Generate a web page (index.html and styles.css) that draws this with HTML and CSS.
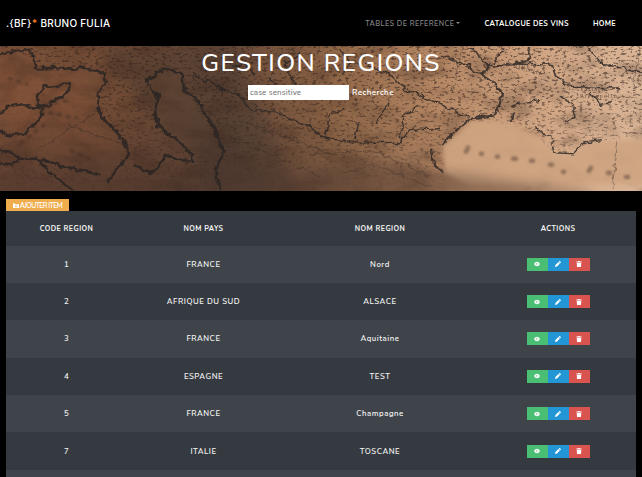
FILE: index.html
```html
<!DOCTYPE html>
<html lang="fr">
<head>
<meta charset="utf-8">
<title>Gestion Regions</title>
<link rel="stylesheet" href="styles.css">
</head>
<body>
<svg width="0" height="0" class="defs">
  <symbol id="eye" viewBox="0 0 12 10"><path fill="#fff" d="M0 5Q2 .5 6 .5T12 5Q10 9.500 6 9.500T0 5"/><circle cx="6" cy="5" r="2.600" fill="#7fc898"/><circle cx="6.500" cy="5.200" r="1.700" fill="#fff"/></symbol>
  <symbol id="pen" viewBox="0 0 10 10"><path fill="#fff" d="M0 10l.7-3.200 5-5 2.500 2.500-5 5zM6.300 1.200 7.300.2q.6-.4 1.200.1l1.200 1.200q.5.600 0 1.200l-1 1z"/></symbol>
  <symbol id="bin" viewBox="0 0 10 11"><path fill="#fff" d="M0 1h3l.6-1h2.800L7 1h3v1.500H0zM.8 3.200h8.400L8.700 11H1.300z"/></symbol>
</svg>
<nav class="nav">
  <a class="brand">.{BF}<b>*</b> BRUNO FULIA</a>
  <div class="links"><a class="muted">TABLES DE REFERENCE<i class="caret"></i></a><a class="cat">CATALOGUE DES VINS</a><a class="home">HOME</a></div>
</nav>
<header class="hero">
  <svg class="map" viewBox="0 0 642 144" preserveAspectRatio="none">
    <defs>
      <linearGradient id="base"><stop offset="0" stop-color="#7a4f38"/><stop offset=".2" stop-color="#704b35"/><stop offset=".36" stop-color="#674938"/><stop offset=".52" stop-color="#8f6647"/><stop offset=".68" stop-color="#b58764"/><stop offset=".84" stop-color="#cfa482"/><stop offset="1" stop-color="#dab596"/></linearGradient>
      <linearGradient id="shade" x2="0" y2="1"><stop offset=".4" stop-color="#3a2c28" stop-opacity="0"/><stop offset="1" stop-color="#3a2c28" stop-opacity=".5"/></linearGradient>
      <linearGradient id="shadeX"><stop offset=".5" stop-color="#fff"/><stop offset="1" stop-color="#000"/></linearGradient>
      <mask id="left"><rect width="480" height="144" fill="url(#shadeX)"/></mask>
      <linearGradient id="fade" x2="0" y2="1"><stop offset=".3" stop-color="#fff"/><stop offset=".65" stop-color="#aaa"/><stop offset="1" stop-color="#333"/></linearGradient>
      <mask id="print"><rect width="642" height="144" fill="url(#fade)"/><g fill="#222"><path d="M0 5 32 12 37 24 95 25 104 32 96 60 126 102 106 130 40 110 0 100z"/><path d="M147 37 160 27 180 28 196 60 220 105 190 112 158 78z"/><path fill="#000" d="M442 98 472 74 535 88 556 108 590 94 642 92V144H450z"/></g></mask>
      <filter id="speck" x="0" y="0" width="1" height="1" color-interpolation-filters="sRGB"><feTurbulence type="fractalNoise" baseFrequency=".24 .42" numOctaves="3" seed="8"/><feColorMatrix values="0 0 0 0 .2 0 0 0 0 .14 0 0 0 0 .12 6 0 0 0 -3.300"/><feGaussianBlur stdDeviation=".3"/></filter>
      <filter id="grain" x="0" y="0" width="1" height="1" color-interpolation-filters="sRGB"><feTurbulence type="fractalNoise" baseFrequency=".03 .06" numOctaves="3" seed="3"/><feColorMatrix values="0 0 0 0 .2 0 0 0 0 .13 0 0 0 0 .1 3 0 0 0 -1.300"/></filter>
      <filter id="rough" x="-.05" y="-.1" width="1.1" height="1.2" color-interpolation-filters="sRGB"><feTurbulence type="fractalNoise" baseFrequency=".14" numOctaves="2" seed="5" result="n"/><feDisplacementMap in="SourceGraphic" in2="n" scale="7" xChannelSelector="R" yChannelSelector="G"/><feGaussianBlur stdDeviation=".4"/></filter>
      <filter id="soft"><feGaussianBlur stdDeviation="1"/></filter>
      <filter id="edge"><feGaussianBlur stdDeviation="2"/></filter>
      <filter id="wide" x="-.2" y="-.4" width="1.4" height="1.800"><feGaussianBlur stdDeviation="6"/></filter>
    </defs>
    <rect width="642" height="144" fill="url(#base)"/>
    <path filter="url(#wide)" fill="#90583a" opacity=".3" d="M0 10 30 15 40 30 90 30 88 60 120 100 90 115 30 105 0 75z"/>
    <path filter="url(#wide)" fill="#38302c" opacity=".3" d="M100 0H235L270 80 290 144H210L190 100 140 60z"/>
    <g mask="url(#left)"><rect width="480" height="144" fill="url(#shade)"/></g>
    <rect width="642" height="144" filter="url(#grain)" opacity=".25"/>
    <g mask="url(#print)"><rect width="642" height="144" filter="url(#speck)" opacity=".55"/></g>
    <path filter="url(#edge)" fill="#cfa582" opacity=".9" d="M443 99 472 75 500 73 535 88 552 105 572 110 590 96 646 92V138L590 136 500 138 470 138 445 126z"/>
    <g filter="url(#rough)" fill="none" stroke="#2a2524" stroke-linejoin="round">
      <g stroke-width="2.600" opacity=".85">
        <path d="M0 9 15 5 30 4 36 22 60 22 92 23 104 28 106 36 98 48 97 60 103 72 118 86 128 102 129 108 118 120 108 136"/>
        <path d="M37 50 45 40 55 40 70 37 68 47 55 53 47 60 38 58z"/>
        <path d="M0 66 8 60 20 58 35 61 42 60 42 68 33 80 22 88 10 89 0 84"/>
        <path d="M0 103 10 106 22 112 40 112 55 118 75 122 100 128M40 114 50 126 65 138 75 144M0 118 12 118 20 111"/>
        <path d="M182 26 168 23 157 26 146 36 158 50 155 64 158 80 175 92 193 108 192 116 180 112 165 108 160 120 150 127 135 118"/>
        <path d="M182 26 184 42 200 58 212 78 218 92 223 106 215 124 221 144"/>
      </g>
      <g stroke-width="1.500" opacity=".8">
        <path d="M195 28 220 42 240 49 248 62 280 67 310 80 322 91 350 95 399 96 410 84 440 82"/>
        <path d="M325 92 330 68 345 62M375 78 388 58M400 92 404 70 418 60M355 92 358 75"/>
        <path d="M365 18 390 28 405 43 438 57 470 71"/>
        <path stroke-width="2.200" d="M442 98 452 88 472 72 495 69 500 57 502 47 494 36 482 29 488 20 515 17 528 14 530 1M432 101 434 118 443 126M511 76 514 67"/>
        <path d="M471 1 488 20M494 16 505 2M515 17 550 18 557 32 572 40 620 42M590 4 602 18 625 22 642 26M440 10 465 18 482 29"/>
        <path d="M535 82 552 90 555 106 573 107 585 95 602 93M560 50 572 57 575 72 565 75M510 60 540 54M590 47 600 58 612 56"/>
        <path d="M300 6 285 20 296 39M340 3 350 16 342 28M230 22 244 17 255 28M270 30 276 45"/>
      </g>
      <g stroke-width=".7" opacity=".55"><path d="M36 104 97 65M68 79 125 98M618 94 612 142M640 0 632 48M462 0 450 55"/><path d="M240 73 330 107M230 90 320 130M310 108 375 104 430 130M340 127 375 118 430 140"/></g>
    </g>
    <path filter="url(#soft)" fill="none" stroke="#332823" stroke-width="2.400" stroke-dasharray="5 4" opacity=".5" d="M20 97 45 78M48 66 78 72M70 103 96 115M45 58 70 54M8 32 28 38"/>
    <path filter="url(#soft)" stroke="#6b5142" stroke-width="4.500" stroke-linecap="round" opacity=".6" d="M466 105l2-4M481 107h1M497 110h1M513 112h3M531 114h2M550 118h2M563 125h1M589 124l2-3M608 126h2M626 130h2"/>
    <path filter="url(#wide)" fill="#553d31" opacity=".45" d="M225 115 300 128 350 110 440 125 590 145V150H225z"/>
    <g class="labels"><text x="513" y="21" transform="rotate(16 513 21)">RIENSIS</text><text x="580" y="45">Tartaria</text><text x="580" y="52">Precopolin</text></g>
  </svg>
  <h1>GESTION REGIONS</h1>
  <div class="search"><input placeholder="case sensitive"><span>Recherche</span></div>
</header>
<main>
  <a class="add"><svg viewBox="0 0 12 10"><path fill="#fff" d="M0 1h4l1 1.500h7V10H0z"/><path stroke="#f0ad4e" stroke-width="1.200" d="M6 4v5M3.500 6.500h5"/></svg><span>AJOUTER ITEM</span></a>
  <div class="table" id="table"><div class="row head"><span>CODE REGION</span><span>NOM PAYS</span><span>NOM REGION</span><span>ACTIONS</span></div></div>
</main>
<script src="script.js"></script>
</body>
</html>
```
FILE: styles.css
```css
* { box-sizing: border-box; }
body { margin: 0; height: 477px; overflow: hidden; background: #000; color: #fff; font-family: Nunito, "Open Sans", sans-serif; }
.defs { display: block; }
.nav { height: 46px; padding: 0 26px 0 6px; display: flex; align-items: center; justify-content: space-between; }
.brand { font: 500 10px Inter, sans-serif; letter-spacing: .25px; white-space: pre; }
.brand b { color: #f37a2d; }
.links { display: flex; gap: 24px; padding-top: 1px; font-size: 7.2px; font-weight: 700; letter-spacing: .34px; white-space: nowrap; }
.muted { color: #858585; letter-spacing: .44px; font-weight: 600; }
.caret { display: inline-block; margin-left: 2px; vertical-align: 2px; border: 2px solid transparent; border-top-color: #858585; border-bottom: 0; }
.hero { height: 145px; position: relative; display: flex; flex-direction: column; align-items: center; overflow: hidden; }
.map { position: absolute; inset: 0; width: 100%; height: 145px; }
.labels { fill: #493a32; font: 6px "Liberation Serif", serif; letter-spacing: 1.2px; opacity: .8; }
h1 { position: relative; margin: 0; font-size: 24.5px; line-height: 35px; font-weight: 500; letter-spacing: 1.4px; white-space: nowrap; }
.search { position: relative; width: 146px; margin-top: 4px; display: flex; align-items: center; gap: 3px; font-size: 8px; font-weight: 600; letter-spacing: .45px; }
input { width: 101px; height: 15px; flex: none; padding: 0 2px; border: 0; background: #fff; font: inherit; font-weight: 500; letter-spacing: .1px; }
input::placeholder { color: #777; opacity: 1; }
main { padding: 8px 6px 0; }
.add { display: flex; align-items: center; justify-content: center; gap: 1px; width: 63px; height: 12px; background: #f0ad4e; font-size: 7px; font-weight: 600; letter-spacing: -.6px; white-space: nowrap; }
.add svg { width: 6px; height: 5px; }
.table { width: 630px; background: #343a40; }
.row { height: 37.4px; display: grid; grid-template-columns: 121px 153px 200px 156px; align-items: center; justify-items: center; font-size: 7.8px; font-weight: 600; letter-spacing: .53px; color: #f4f4f4; }
.row:nth-child(even) { background: #3f444a; }
.row:last-child { height: 7px; }
.head { height: 34.5px; padding-top: 1px; font-size: 7.1px; font-weight: 700; letter-spacing: .42px; }
.actions { display: flex; width: 63px; height: 13px; }
.actions i { flex: 1; display: flex; align-items: center; justify-content: center; }
.actions svg { width: 6px; height: 6px; }
.view { background: #4abf74; }
.edit { background: #2397d5; }
.drop { background: #d9534f; }
```
FILE: script.js
```js
const regions = [
  ["1", "FRANCE", "Nord"],
  ["2", "AFRIQUE DU SUD", "ALSACE"],
  ["3", "FRANCE", "Aquitaine"],
  ["4", "ESPAGNE", "TEST"],
  ["5", "FRANCE", "Champagne"],
  ["7", "ITALIE", "TOSCANE"]
];
const icon = (cls, id) => `<i class="${cls}"><svg><use href="#${id}"/></svg></i>`;
const actions = `<div class="actions">${icon("view", "eye")}${icon("edit", "pen")}${icon("drop", "bin")}</div>`;
document.getElementById("table").insertAdjacentHTML("beforeend",
  regions.map(r => `<div class="row">${r.map(c => `<span>${c}</span>`).join("")}${actions}</div>`).join("") + '<div class="row"></div>');
```
